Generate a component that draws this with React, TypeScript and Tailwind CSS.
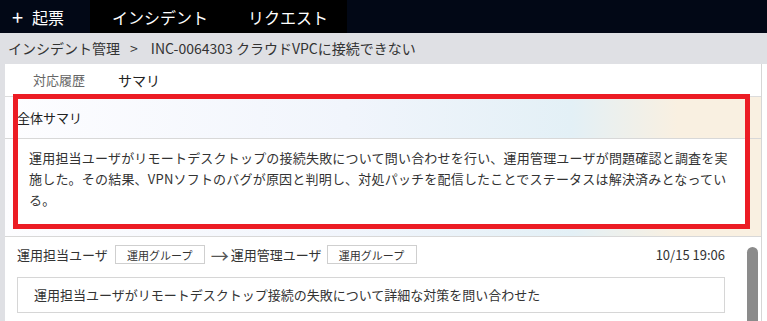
const FONT = "font-['Noto_Sans_CJK_JP','Noto_Sans',sans-serif]"

const SUMMARY_LINES = [
  '運用担当ユーザがリモートデスクトップの接続失敗について問い合わせを行い、運用管理ユーザが問題確認と調査を実',
  '施した。その結果、VPNソフトのバグが原因と判明し、対処パッチを配信したことでステータスは解決済みとなってい',
  'る。',
]

function GroupBadge({ label }: { label: string }) {
  return (
    <span className="inline-flex h-[19px] w-[90px] items-center justify-center border border-[#cfcfcf] bg-white text-[11px] text-[#333]">
      {label}
    </span>
  )
}

export default function App() {
  return (
    <div className={`${FONT} h-[321px] w-[767px] overflow-hidden bg-[#dfe0e4] text-[#333]`}>
      {/* top nav */}
      <nav className="flex h-[33px] bg-[#020816] text-[16px] text-white">
        <div className="flex w-[90px] items-center pl-[12px]">
          <span className="mr-[9px] text-[20px] leading-none">+</span>
          <span>起票</span>
        </div>
        <div className="flex w-[257px] items-center bg-black">
          <span className="ml-[22px]">インシデント</span>
          <span className="ml-[40px]">リクエスト</span>
        </div>
      </nav>

      {/* breadcrumb */}
      <div className="flex h-[31px] items-center pl-[8px] text-[14px] text-[#333]">
        <span>インシデント管理</span>
        <span className="ml-[10px] mr-[13px]">&gt;</span>
        <span>INC-0064303 クラウドVPCに接続できない</span>
      </div>

      <div className="flex h-[257px] bg-white">
        <div className="w-[5px] bg-[#dfe0e4]" />
        <div className="relative w-[757px] border-r border-[#d6d6d6]">
          {/* tabs */}
          <div className="flex h-[33px] items-center border-b border-[#dcdcdc] text-[13px]">
            <span className="ml-[28px] text-[#666]">対応履歴</span>
            <span className="ml-[33px] text-[14px] text-[#222]">サマリ</span>
          </div>

          {/* summary */}
          <section className="border-b border-[#d8d8d8] bg-[linear-gradient(90deg,#fdfdff_0%,#f1f5fc_45%,#e3f0f6_75%,#f9f0e1_89%,#f9f0e1_100%)]">
            <div className="flex h-[42px] items-center border-b border-[#d8d8d8] pl-[12px] text-[13px] text-[#222]">
              全体サマリ
            </div>
            <div className="pb-[9px] pl-[8px] pr-[12px]">
              <div className="bg-white pb-[17px] pl-[16px] pr-[8px] pt-[8px] text-[13px] leading-[21px] tracking-[0.2px] text-[#333]">
                {SUMMARY_LINES.map((line) => (
                  <div key={line} className="whitespace-nowrap">
                    {line}
                  </div>
                ))}
              </div>
            </div>
          </section>

          {/* history entry */}
          <div className="pl-[12px] pr-[36px] pt-[8px]">
            <div className="flex h-[19px] items-center text-[13px]">
              <span>運用担当ユーザ</span>
              <span className="ml-[7px]">
                <GroupBadge label="運用グループ" />
              </span>
              <span className="ml-[6px] text-[18px] leading-none text-[#555]">→</span>
              <span className="ml-[2px]">運用管理ユーザ</span>
              <span className="ml-[5px]">
                <GroupBadge label="運用グループ" />
              </span>
              <span className="ml-auto text-[#333]">10/15 19:06</span>
            </div>
            <div className="mt-[13px] flex h-[36px] items-center border border-[#d6d6d6] pl-[16px] text-[13px]">
              運用担当ユーザがリモートデスクトップ接続の失敗について詳細な対策を問い合わせた
            </div>
          </div>

          {/* annotation highlight */}
          <div className="pointer-events-none absolute left-[8px] top-[30px] h-[135px] w-[737px] border-[5px] border-[#ec1c24]" />

          {/* scrollbar thumb */}
          <div className="absolute left-[742px] top-[183px] h-[100px] w-[11px] rounded-t-full bg-[#8b8b8b]" />
        </div>
      </div>
    </div>
  )
}
